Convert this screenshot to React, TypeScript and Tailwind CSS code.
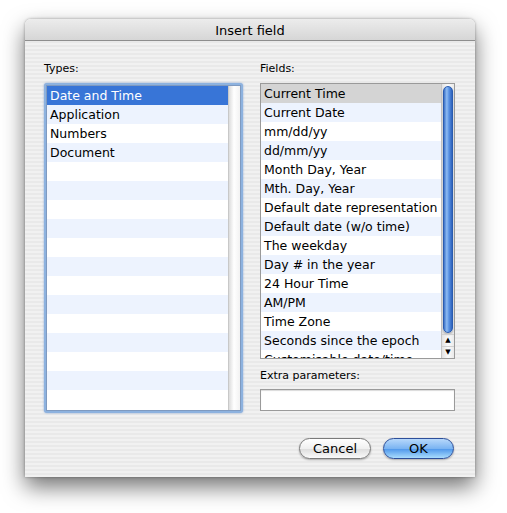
import React from "react";

const types = ["Date and Time", "Application", "Numbers", "Document"];
const fields = [
  "Current Time",
  "Current Date",
  "mm/dd/yy",
  "dd/mm/yy",
  "Month Day, Year",
  "Mth. Day, Year",
  "Default date representation",
  "Default date (w/o time)",
  "The weekday",
  "Day # in the year",
  "24 Hour Time",
  "AM/PM",
  "Time Zone",
  "Seconds since the epoch",
  "Customisable date/time",
];

const font = { fontFamily: '"DejaVu Sans", "Liberation Sans", sans-serif' };

function Row({ label, i, selected, gray }: { label: string; i: number; selected?: boolean; gray?: boolean }) {
  let cls = i % 2 === 1 ? "bg-[#edf3fe] text-black" : "bg-white text-black";
  if (selected) cls = gray ? "bg-[#d4d4d4] text-black" : "bg-[#3875d7] text-white";
  return (
    <div className={`h-[19px] shrink-0 whitespace-nowrap pl-[3px] text-[12.5px] leading-[19px] ${cls}`}>{label}</div>
  );
}

function Types() {
  const rows = [...types, ...Array(13).fill("")];
  return (
    <div className="h-[330px] w-[199px] rounded-[3px] bg-[#8db2df] p-[2px] shadow-[0_0_2px_rgba(60,110,190,0.6)]">
      <div className="flex h-full border border-[#7f9ac0] bg-white">
        <div className="flex flex-1 flex-col overflow-hidden">
          {rows.map((t, i) => (
            <Row key={i} label={t} i={i} selected={i === 0} />
          ))}
        </div>
        <div className="w-[12px] border-l border-[#c8c8c8] bg-[linear-gradient(to_right,#dcdcdc,#ffffff_45%,#f2f2f2)]" />
      </div>
    </div>
  );
}

function Fields() {
  return (
    <div className="flex h-[276px] w-[195px] border border-[#9a9a9a] bg-white">
      <div className="flex flex-1 flex-col overflow-hidden">
        {fields.map((t, i) => (
          <Row key={i} label={t} i={i} selected={i === 0} gray />
        ))}
      </div>
      <div className="flex w-[13px] flex-col border-l border-[#c4c4c4] bg-[linear-gradient(to_right,#e2e2e2,#fbfbfb_50%,#eaeaea)]">
        <div className="mx-auto mt-[2px] h-[247px] w-[10px] rounded-full border border-[#2a5cb0] bg-[linear-gradient(to_right,#3c72c8,#8fbcf3_35%,#5a93e4_60%,#2f63bd)] shadow-[0_2px_2px_rgba(0,0,0,0.25)]" />
        <div className="flex-1" />
        <div className="flex h-[12px] items-center justify-center border-t border-[#d0d0d0] text-[7px] leading-none text-black">▲</div>
        <div className="flex h-[12px] items-center justify-center border-t border-[#d0d0d0] text-[7px] leading-none text-black">▼</div>
      </div>
    </div>
  );
}

export default function App() {
  return (
    <div className="h-[513px] w-[507px] bg-white pl-[25px] pt-[19px]" style={font}>
      <div className="flex h-[458px] w-[450px] flex-col overflow-hidden rounded-t-[6px] bg-[repeating-linear-gradient(to_bottom,#f1f1f1_0px,#f1f1f1_2px,#e9e9e9_2px,#e9e9e9_4px)] shadow-[0_10px_22px_rgba(0,0,0,0.55),0_0_3px_rgba(0,0,0,0.35)]">
        <div className="flex h-[22px] shrink-0 items-center justify-center border-b border-[#8e8e8e] bg-[linear-gradient(to_bottom,#ececec,#d6d6d6)] pt-[2px] text-[13px] text-black">
          Insert field
        </div>
        <div className="flex pl-[19px] pt-[21px]">
          <div className="flex flex-col">
            <div className="h-[21px] text-[11px] leading-[14px] text-black">Types:</div>
            <Types />
          </div>
          <div className="ml-[17px] flex flex-col">
            <div className="h-[21px] text-[11px] leading-[14px] text-black">Fields:</div>
            <Fields />
            <div className="mt-[10px] h-[20px] text-[11px] leading-[14px] text-black">Extra parameters:</div>
            <div className="h-[22px] w-[195px] border border-[#9a9a9a] bg-white shadow-[inset_0_1px_1px_rgba(0,0,0,0.15)]" />
          </div>
        </div>
        <div className="mt-[25px] flex justify-end gap-[12px] pr-[21px]">
          <button className="h-[21px] w-[72px] rounded-full border border-[#7a7a7a] bg-[linear-gradient(to_bottom,#ffffff,#f0f0f0_50%,#dcdcdc_51%,#fafafa)] text-[13px] leading-none text-black shadow-[0_1px_2px_rgba(0,0,0,0.3)]">
            Cancel
          </button>
          <button className="h-[21px] w-[71px] rounded-full border border-[#2d4f9a] bg-[linear-gradient(to_bottom,#b7d8fb,#7bb4f2_50%,#4c95ea_51%,#a9dcfd)] text-[13px] leading-none text-black shadow-[0_1px_2px_rgba(0,0,0,0.3)]">
            OK
          </button>
        </div>
      </div>
    </div>
  );
}
